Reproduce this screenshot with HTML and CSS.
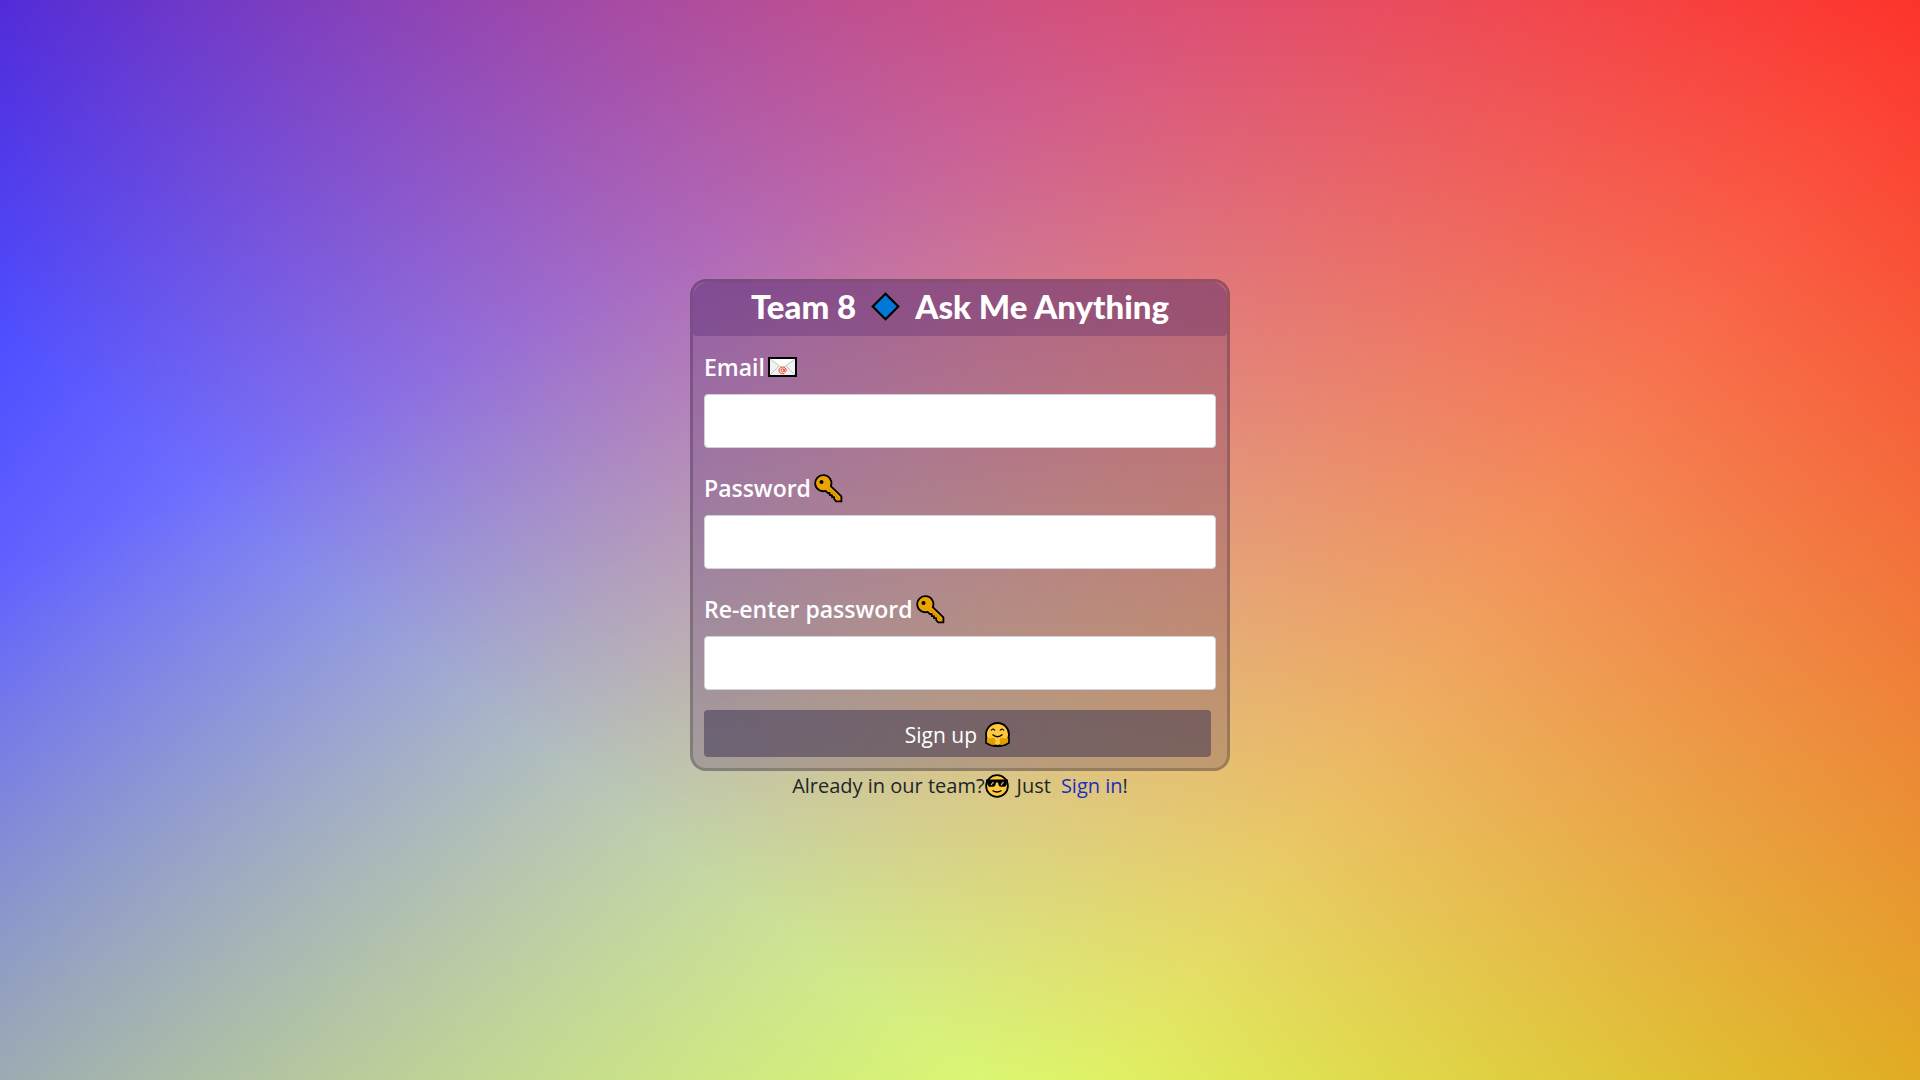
FILE: index.html
```html
<!DOCTYPE html>
<html lang="en">
<head>
<meta charset="utf-8">
<meta name="viewport" content="width=device-width, initial-scale=1">
<title>Team 8 - Ask Me Anything</title>
<link rel="stylesheet" href="styles.css">
</head>
<body>
<svg class="sprite" aria-hidden="true">
  <symbol id="key" viewBox="0 0 29 29">
    <path d="M9.5 1.2a8 8 0 1 0 2.2 15.6l2 2.2h2v2.200h2.300v2h2.200v2l2 2.200h5.200v-5L16.800 12.200A8 8 0 0 0 9.500 1.200z" fill="#eba300" stroke="#000" stroke-width="1.800" stroke-linejoin="round"/>
    <path d="M15 15l10.500 10.500" stroke="#c98600" stroke-width="1"/>
    <circle cx="7.500" cy="8" r="2"/>
  </symbol>
</svg>
<main class="page">
  <section class="card">
    <h1 class="card-title">
      <span>Team 8</span>
      <svg class="icon-diamond" viewBox="0 0 29 29" aria-hidden="true"><path d="M14.500 1.700L27.300 14.500L14.500 27.300L1.700 14.500z" fill="#0078d7" stroke="#000" stroke-width="2.200"/></svg>
      <span>Ask Me Anything</span>
    </h1>
    <form class="form">
      <div class="field">
        <label class="label" for="email">Email
          <svg class="icon-mail" viewBox="0 0 29 20" aria-hidden="true">
            <path d="M1 1h27v18H1z" fill="#f2f2f2" stroke="#000" stroke-width="2"/>
            <path d="M2 2h25L14.500 11z" fill="#fff"/>
            <path d="M2 2l12.500 9L27 2M2 18l9-9M27 18l-9-9" fill="none" stroke="#c4c4c4"/>
            <circle cx="14.500" cy="13.300" r="3.400" fill="#f2f2f2"/>
            <path d="M16.500 16.300a3.600 3.400 0 1 1 1.700-3c0 1.900-2 2-2 .5v-2" fill="none" stroke="#f03a17"/>
            <circle cx="14.500" cy="13.300" r="1.500" fill="none" stroke="#f03a17"/>
          </svg>
        </label>
        <input class="input" id="email" type="email">
      </div>
      <div class="field">
        <label class="label" for="password">Password <svg class="icon-key" aria-hidden="true"><use href="#key"/></svg></label>
        <input class="input" id="password" type="password">
      </div>
      <div class="field">
        <label class="label" for="repeat">Re-enter password <svg class="icon-key" aria-hidden="true"><use href="#key"/></svg></label>
        <input class="input" id="repeat" type="password">
      </div>
      <button class="button" type="button">Sign up
        <svg class="icon-hug" viewBox="0 0 25 25" aria-hidden="true">
          <circle cx="12.500" cy="12.500" r="11.500" fill="#ffc83d" stroke="#000" stroke-width="1.800"/>
          <path d="M1.200 16l3.300.4L9 15.500l1.500 3-1 5L5.500 23 1.200 20.500zM23.800 16l-3.300.4L16 15.500l-1.500 3 1 5 4-.5 4.300-2.500z" fill="#e19d00"/>
          <path d="M1 16v5l4.500 2.300 4 .7h6l4-.7L24 21v-5" fill="none" stroke="#000" stroke-width="1.600" stroke-linejoin="round"/>
          <path d="M6 8.500q2-2.800 4 0M15 8.500q2-2.800 4 0M7.500 12.500q5 4.500 10 0" fill="none" stroke="#000" stroke-width="1.200"/>
        </svg>
      </button>
    </form>
  </section>
  <p class="signin">
    <span>Already in our team?</span>
    <svg class="icon-cool" viewBox="0 0 24 24" aria-hidden="true">
      <circle cx="12" cy="12" r="10.900" fill="#ffc83d" stroke="#000" stroke-width="1.800"/>
      <path d="M1 5.500h22v2.200h-1l-.7 3.300q-.3 1.700-2 1.700h-3.500q-1.700 0-2.200-1.700L13 8.500h-2L10.400 11q-.5 1.700-2.200 1.700H4.700Q3 12.700 2.700 11L2 7.700H1z"/>
      <path d="M8.500 8l-2.500 3M18.500 8L16 11" stroke="#aaa" stroke-width="1.200"/>
      <path d="M7.500 16.500q4.500 3 9 0" fill="none" stroke="#000" stroke-width="1.300"/>
    </svg>
    <span class="just">Just</span>
    <span><a class="link" href="#">Sign in</a>!</span>
  </p>
</main>
</body>
</html>
```
FILE: styles.css
```css
* {
  box-sizing: border-box;
}

body {
  margin: 0;
  color: #212529;
  font-family: "Open Sans", "Noto Sans", sans-serif;
  background:
    linear-gradient(217deg, rgba(255, 0, 0, .8), rgba(255, 0, 0, 0) 70.71%),
    linear-gradient(336deg, rgba(200, 250, 0, .8), rgba(200, 250, 0, 0) 70.71%),
    linear-gradient(127deg, rgba(0, 0, 255, .8), rgba(0, 0, 255, 0) 70.71%),
    #fff;
}

.sprite {
  position: absolute;
  width: 0;
  height: 0;
}

.page {
  min-height: 100vh;
  display: flex;
  flex-direction: column;
  align-items: center;
  justify-content: center;
}

.card {
  width: 100%;
  max-width: 540px;
  border: 3px solid rgba(0, 0, 0, .2);
  border-radius: 16px;
  background: rgba(85, 50, 105, .26);
}

.card-title {
  display: flex;
  align-items: center;
  justify-content: center;
  gap: 15px;
  height: 54px;
  margin: 0;
  padding-bottom: 6px;
  border-radius: 16px 16px 4px 4px;
  background: rgba(60, 20, 100, .25);
  color: #fff;
  font: 900 33px/48px Lato, sans-serif;
}

.form {
  display: flex;
  flex-direction: column;
  gap: 20px;
  padding: 11px;
}

.field {
  display: flex;
  flex-direction: column;
  gap: 7px;
}

.label {
  display: flex;
  align-items: center;
  gap: 3px;
  color: #fff;
  font-size: 23px;
  font-weight: 600;
  line-height: 40px;
}

.input {
  width: 100%;
  height: 54px;
  padding: 6px 12px;
  border: 1px solid #ced4da;
  border-radius: 4px;
  background: #fff;
  font: inherit;
  font-size: 20px;
}

.button {
  display: flex;
  align-items: center;
  justify-content: center;
  gap: 8px;
  width: 99%;
  height: 47px;
  padding: 2px 0 0;
  border: 0;
  border-radius: 4px;
  background: rgba(42, 33, 70, .45);
  color: #fff;
  font: inherit;
  font-size: 21px;
  line-height: 30px;
}

.signin {
  display: flex;
  align-items: center;
  margin: 0;
  font-size: 20px;
  line-height: 30px;
}

.just {
  margin: 0 10px 0 8px;
}

.link {
  color: #1a2fc0;
  text-decoration: none;
}

.icon-diamond {
  width: 29px;
  height: 29px;
}

.icon-mail {
  width: 29px;
  height: 20px;
}

.icon-key {
  width: 29px;
  height: 29px;
}

.icon-hug {
  width: 25px;
  height: 25px;
}

.icon-cool {
  width: 24px;
  height: 24px;
}
```
